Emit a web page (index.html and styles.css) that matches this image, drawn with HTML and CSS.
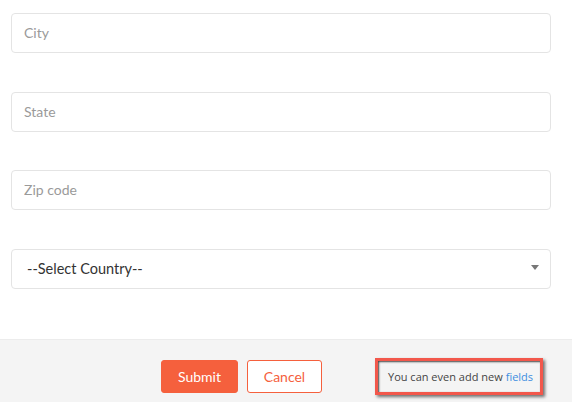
FILE: index.html
```html
<!DOCTYPE html>
<html lang="en">
<head>
  <meta charset="UTF-8">
  <title>Address Form</title>
  <link rel="stylesheet" href="styles.css">
</head>
<body>
  <form class="form" onsubmit="event.preventDefault();">
    <div class="fields">
      <input type="text" class="field" placeholder="City" />
      <input type="text" class="field" placeholder="State" />
      <input type="text" class="field field-zip" placeholder="Zip code" />
      <div class="select-wrap">
        <select class="field select">
          <option value="">--Select Country--</option>
          <option value="us">United States</option>
          <option value="ca">Canada</option>
        </select>
        <span class="caret"></span>
      </div>
    </div>

    <div class="footer">
      <div class="actions">
        <button type="submit" class="btn btn-primary">Submit</button>
        <button type="button" class="btn btn-outline">Cancel</button>
      </div>
      <div class="note">You can even add new <a href="#">fields</a></div>
    </div>
  </form>
</body>
</html>
```

FILE: styles.css
```css
body {
  margin: 0;
  font-family: Lato, "Open Sans", sans-serif;
  background: white;
}
.fields {
  display: grid;
  gap: 39px;
  padding: 13px 21px 50px 11px;
}
.field {
  box-sizing: border-box;
  width: 100%;
  height: 40px;
  padding: 0 12px 2px;
  border: 1px solid #e4e4e4;
  border-radius: 4px;
  font-family: inherit;
  font-size: 14px;
  color: #333;
  background: white;
  outline: none;
}
.field-zip {
  margin-top: -1px;
}
.field::placeholder {
  color: #9a9a9a;
}
.select-wrap {
  position: relative;
}
.select {
  appearance: none;
  padding-left: 15px;
  font-size: 14.5px;
  color: #333;
}
.caret {
  position: absolute;
  right: 12px;
  top: 16px;
  width: 0;
  height: 0;
  border-left: 4px solid transparent;
  border-right: 4px solid transparent;
  border-top: 5px solid #777;
  pointer-events: none;
}
.footer {
  display: flex;
  align-items: center;
  background: #f4f4f4;
  border-top: 1px solid #ececec;
  padding: 20px 0 9px 161px;
  height: 33px;
}
.actions {
  display: flex;
  gap: 9px;
}
.btn {
  box-sizing: border-box;
  height: 33px;
  padding-bottom: 2px;
  border-radius: 3px;
  font-family: inherit;
  font-size: 14px;
  cursor: pointer;
}
.btn-primary {
  width: 77px;
  background: #f5603d;
  border: 1px solid #f5603d;
  color: white;
}
.btn-outline {
  width: 75px;
  background: white;
  border: 1px solid #f5603d;
  color: #f5603d;
}
.note {
  margin-left: 53px;
  box-sizing: border-box;
  width: 168px;
  height: 37px;
  padding-left: 10px;
  display: flex;
  align-items: center;
  border: 3px solid #f2574b;
  box-shadow: inset 1px 1px 2px #444, 2px 2px 3px rgba(0,0,0,0.55);
  background: #f4f4f4;
  font-family: "Open Sans", sans-serif;
  font-size: 11px;
  color: #444;
}
.note a {
  color: #3d8ee0;
  text-decoration: none;
  margin-left: 3px;
}
```
